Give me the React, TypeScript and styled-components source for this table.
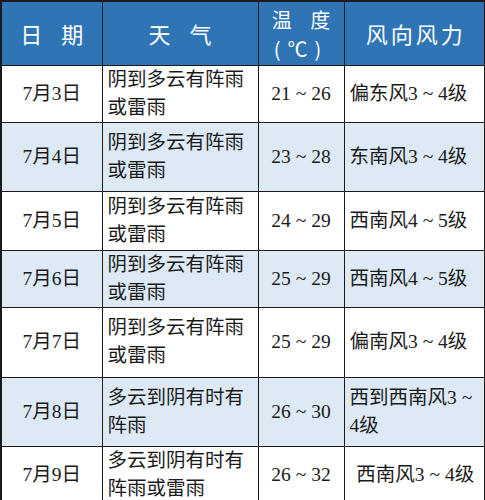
import styled, { createGlobalStyle } from "styled-components";

const GlobalStyle = createGlobalStyle`
  html, body {
    margin: 0;
    padding: 0;
    background: #ffffff;
  }
`;

interface IRow {
  date: string;
  weather: string;
  temp: string;
  wind: string;
  height: number;
  shaded: boolean;
  windCenter?: boolean;
}

const rows: IRow[] = [
  { date: "7月3日", weather: "阴到多云有阵雨或雷雨", temp: "21 ~ 26", wind: "偏东风3 ~ 4级", height: 56, shaded: false },
  { date: "7月4日", weather: "阴到多云有阵雨或雷雨", temp: "23 ~ 28", wind: "东南风3 ~ 4级", height: 69, shaded: true },
  { date: "7月5日", weather: "阴到多云有阵雨或雷雨", temp: "24 ~ 29", wind: "西南风4 ~ 5级", height: 59, shaded: false },
  { date: "7月6日", weather: "阴到多云有阵雨或雷雨", temp: "25 ~ 29", wind: "西南风4 ~ 5级", height: 55, shaded: true },
  { date: "7月7日", weather: "阴到多云有阵雨或雷雨", temp: "25 ~ 29", wind: "偏南风3 ~ 4级", height: 70, shaded: false },
  { date: "7月8日", weather: "多云到阴有时有阵雨", temp: "26 ~ 30", wind: "西到西南风3 ~ 4级", height: 69, shaded: true },
  { date: "7月9日", weather: "多云到阴有时有阵雨或雷雨", temp: "26 ~ 32", wind: "西南风3 ~ 4级", height: 56, shaded: false, windCenter: true },
];

const App = () => {
  return (
    <>
      <GlobalStyle />
      <Table>
        <colgroup>
          <col style={{ width: 101 }} />
          <col style={{ width: 156 }} />
          <col style={{ width: 86 }} />
          <col style={{ width: 141 }} />
        </colgroup>
        <thead>
          <tr>
            <HeadCell $spread>日 期</HeadCell>
            <HeadCell $spread>天 气</HeadCell>
            <TempHead $spread>
              温 度
              <br />
              (℃)
            </TempHead>
            <HeadCell>风向风力</HeadCell>
          </tr>
        </thead>
        <tbody>
          {rows.map(item => (
            <Row key={item.date} $shaded={item.shaded} style={{ height: item.height }}>
              <DateCell>{item.date}</DateCell>
              <TextCell>{item.weather}</TextCell>
              <TempCell>{item.temp}</TempCell>
              <TextCell $center={item.windCenter}>{item.wind}</TextCell>
            </Row>
          ))}
        </tbody>
      </Table>
    </>
  );
};

const Table = styled.table`
  width: 484px;
  border-collapse: collapse;
  table-layout: fixed;
  border: 2px solid #1a1a1a;
  font-family: "Liberation Serif", "Noto Sans CJK SC", serif;
  color: #1a1a1a;
`;

const HeadCell = styled.th<{ $spread?: boolean }>`
  height: 64px;
  box-sizing: border-box;
  background: #2f75b5;
  color: #ffffff;
  font-family: "Noto Sans CJK SC", sans-serif;
  font-size: 22px;
  font-weight: 400;
  line-height: 28px;
  letter-spacing: ${props => (props.$spread ? "7px" : "3px")};
  text-indent: ${props => (props.$spread ? "7px" : "3px")};
  text-align: center;
  padding: 0;
  border: 1.5px solid #1a1a1a;
`;

const TempHead = styled(HeadCell)`
  font-size: 20px;
  line-height: 29px;
  padding-top: 1px;
`;

const Row = styled.tr<{ $shaded: boolean }>`
  background: ${props => (props.$shaded ? "#ddeaf6" : "#ffffff")};
`;

const BaseCell = styled.td`
  border: 1.5px solid #1a1a1a;
  font-size: 19.5px;
  line-height: 28px;
  vertical-align: middle;
  padding: 0 5px;
`;

const DateCell = styled(BaseCell)`
  text-align: center;
`;

const TempCell = styled(BaseCell)`
  text-align: center;
  padding: 0;
`;

const TextCell = styled(BaseCell)<{ $center?: boolean }>`
  text-align: ${props => (props.$center ? "center" : "left")};
  padding: 0 3px 0 5px;
`;

export default App;
